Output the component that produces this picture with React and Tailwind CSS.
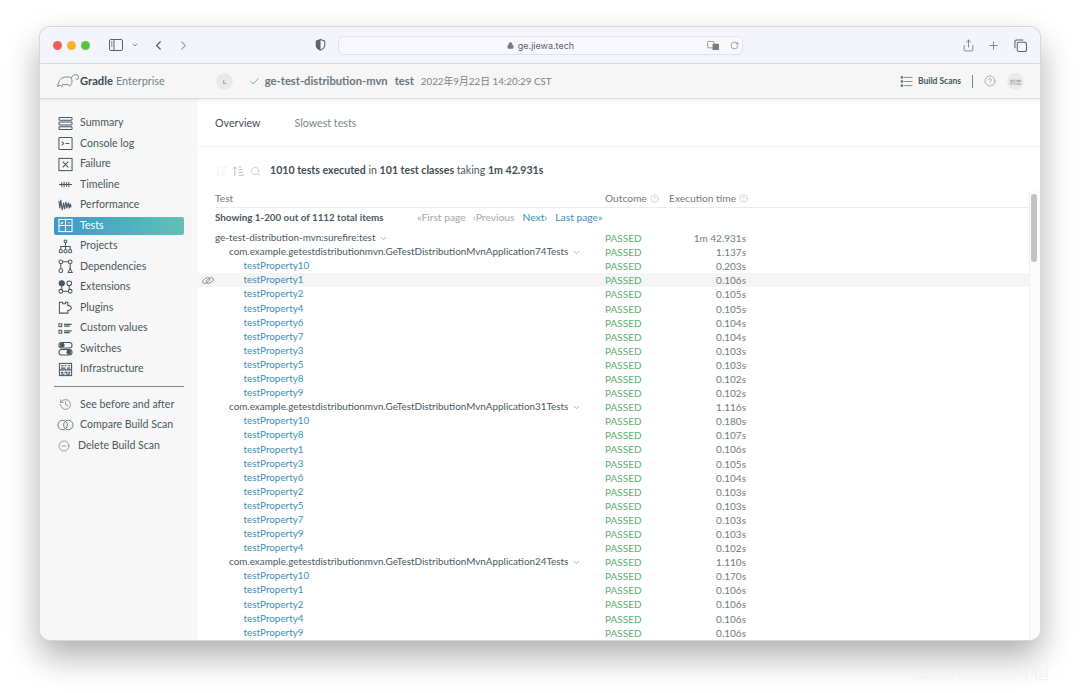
import React from "react";
import {
  ChevronLeft, ChevronRight, ChevronDown, Plus, Check, Search, Lock, RotateCw, Share, HelpCircle,
  History, MinusCircle,
} from "lucide-react";

const stroke = { fill: "none", stroke: "currentColor", strokeWidth: 1.1 };

function Ico({ children }) {
  return <svg viewBox="0 0 16 16" className="w-[15px] h-[15px]" {...stroke}>{children}</svg>;
}

const navItems = [
  { label: "Summary", icon: <Ico><rect x="1" y="1.5" width="14" height="3" rx="1" /><rect x="1" y="6.5" width="14" height="3" rx="1" /><rect x="1" y="11.5" width="14" height="3" rx="1" /></Ico> },
  { label: "Console log", icon: <Ico><rect x="1" y="1.5" width="14" height="13" rx="1" /><path d="M4 6l2 2-2 2M8 8h4" /></Ico> },
  { label: "Failure", icon: <Ico><rect x="1" y="1.5" width="14" height="13" /><path d="M5 5l6 6M11 5l-6 6" /></Ico> },
  { label: "Timeline", icon: <Ico><path d="M1 8h14M4 5.5v5M6.5 5v6M9 5.5v5M11.5 5v6" /></Ico> },
  { label: "Performance", icon: <Ico><path d="M1 3l1 8 1-9 1.5 11L6 5l1 7 1.500-8 1 7 1.500-6 1 6 1-5 1 4" /></Ico> },
  { label: "Tests", active: true, icon: <Ico><rect x="1" y="1.5" width="14" height="13" /><path d="M8 1.5v13M1 8h14M3 5l1 1 1.500-2M10.5 5h2" /></Ico> },
  { label: "Projects", icon: <Ico><rect x="6.5" y="1" width="3" height="3" rx="1.5" /><path d="M8 4v4M3 11V8h10v3M8 8v3" /><circle cx="3" cy="13" r="1.7" /><circle cx="8" cy="13" r="1.7" /><circle cx="13" cy="13" r="1.7" /></Ico> },
  { label: "Dependencies", icon: <Ico><circle cx="3" cy="3" r="2" /><circle cx="13" cy="3" r="2" /><path d="M5 3h6M3 5v5M13 5v5" /><circle cx="3" cy="12.5" r="2" /><path d="M13 10l2.200 4.500h-4.400z" /></Ico> },
  { label: "Extensions", icon: <Ico><circle cx="4" cy="3.5" r="2.8" fill="currentColor" /><circle cx="12" cy="3.5" r="2.5" /><circle cx="3" cy="12" r="2" /><circle cx="13" cy="12" r="2" /><path d="M5 12h6M4 7v3M12 6v4" /></Ico> },
  { label: "Plugins", icon: <Ico><path d="M1.5 2.5H5V4h3V2.500h2.500V6h2l2 2.500-2 2.500h-2v3h-9z" /></Ico> },
  { label: "Custom values", icon: <Ico><rect x="1" y="3" width="3" height="3" /><rect x="1" y="10" width="3" height="3" /><path d="M6.5 3.5h8M6.5 5.5h6M6.5 10.5h8M6.5 12.5h6" strokeWidth="1.3" /></Ico> },
  { label: "Switches", icon: <Ico><rect x="1" y="1.5" width="14" height="6" rx="3" /><circle cx="4.5" cy="4.5" r="2" fill="currentColor" /><rect x="1" y="9" width="14" height="6" rx="3" /><circle cx="11.5" cy="12" r="2" fill="currentColor" /></Ico> },
  { label: "Infrastructure", icon: <Ico><rect x="1.5" y="1.5" width="13" height="13" /><path d="M3 4h3M7 4h2M10.5 4H13M3 6.5h5M9.5 6.5H13M1.5 8.5h13M3 11h2.500M7 11h3M11 11h2M3 13h4M8.5 13H13" strokeWidth="1.3" /></Ico> },
];

function Group({ name, time, rows }) {
  return (
    <>
      <Row indent="pl-[14px]" time={time}>
        <span className="text-[#4a5860] text-[9.9px]">{name}</span>
        <ChevronDown className="w-[9px] h-[9px] ml-[4px] text-[#8a959b]" />
      </Row>
      {rows.map(([n, t]) => (
        <Row key={n} indent="pl-[28.5px]" time={t} highlight={name.includes("74") && n === 1}>
          <span className="text-[#3b8fb5] text-[9.9px]">testProperty{n}</span>
        </Row>
      ))}
    </>
  );
}

function Row({ indent, time, highlight, children }) {
  return (
    <div className={`relative flex items-center h-[14.1px] leading-none ${highlight ? "bg-[#f5f5f5] -ml-[17px] pl-[17px]" : ""}`}>
      {highlight && (
        <svg viewBox="0 0 14 10" className="absolute left-[4px] w-[12px] h-[9px] text-[#85898d]" fill="none" stroke="currentColor" strokeWidth="1">
          <ellipse cx="4.8" cy="5" rx="4.6" ry="2.6" transform="rotate(-35 4.8 5)" />
          <ellipse cx="9.2" cy="5" rx="4.6" ry="2.6" transform="rotate(-35 9.2 5)" />
        </svg>
      )}
      <div className={`w-[390px] flex items-center shrink-0 ${indent}`}>{children}</div>
      <div className="w-[80px] text-[#5eae72] shrink-0">PASSED</div>
      <div className="w-[61px] text-right text-[#737b80] shrink-0">{time}</div>
    </div>
  );
}

const group1 = [[10, "0.203s"], [1, "0.106s"], [2, "0.105s"], [4, "0.105s"], [6, "0.104s"], [7, "0.104s"], [3, "0.103s"], [5, "0.103s"], [8, "0.102s"], [9, "0.102s"]];
const group2 = [[10, "0.180s"], [8, "0.107s"], [1, "0.106s"], [3, "0.105s"], [6, "0.104s"], [2, "0.103s"], [5, "0.103s"], [7, "0.103s"], [9, "0.103s"], [4, "0.102s"]];
const group3 = [[10, "0.170s"], [1, "0.106s"], [2, "0.106s"], [4, "0.106s"], [9, "0.106s"]];

export default function App() {
  return (
    <div className="relative w-[1080px] h-[693px] overflow-hidden bg-white pt-[27px] px-[40px] font-['Lato','Noto_Sans_CJK_SC',sans-serif] text-[#4a5860]">
      <div className="h-[613px] rounded-[10px] overflow-hidden flex flex-col bg-white shadow-[0_0_0_1px_#d8d8da,0_16px_34px_rgba(0,0,0,0.33)]">

        {/* browser toolbar */}
        <div className="h-[37px] shrink-0 flex items-center bg-[#f4f4fd] border-b border-[#dcdce6] relative text-[#5f6166]">
          <div className="flex items-center gap-[5px] ml-[13px]">
            <span className="w-[9px] h-[9px] rounded-full bg-[#ee5f54]" />
            <span className="w-[9px] h-[9px] rounded-full bg-[#f5b62f]" />
            <span className="w-[9px] h-[9px] rounded-full bg-[#5cc242]" />
          </div>
          <svg viewBox="0 0 14 12" className="w-[14px] h-[12px] ml-[19px]" fill="none" stroke="currentColor" strokeWidth="1">
            <rect x="0.5" y="0.5" width="13" height="11" rx="1.5" />
            <path d="M5 .5v11M2 3h1.500M2 5h1.500M2 7h1.500" />
          </svg>
          <ChevronDown className="w-[8px] h-[8px] ml-[8px] text-[#77797e]" strokeWidth={2.5} />
          <ChevronLeft className="w-[15px] h-[15px] ml-[12px]" strokeWidth={1.8} />
          <ChevronRight className="w-[15px] h-[15px] ml-[10px] text-[#a6a7ad]" strokeWidth={1.8} />
          <svg viewBox="0 0 12 14" className="w-[11px] h-[12px] ml-[124px]">
            <path d="M6 .7l5 1.800v4.500c0 3-2.200 4.800-5 6-2.800-1.200-5-3-5-6V2.500z" fill="none" stroke="currentColor" strokeWidth="1.2" />
            <path d="M6 .7v13c-2.800-1.200-5-3-5-6V2.500z" fill="currentColor" />
          </svg>
          <div className="w-[405px] h-[19px] ml-[12px] pt-[1px] rounded-[5px] border border-[#e2e2ec] bg-[#f7f7fd] flex items-center justify-center relative">
            <Lock className="w-[7px] h-[7px] mr-[4px] text-[#77797e]" fill="currentColor" />
            <span className="text-[9px] text-[#5f6166] font-['Inter',sans-serif]">ge.jiewa.tech</span>
            <svg viewBox="0 0 14 11" className="absolute right-[22px] w-[13px] h-[10px] text-[#77797e]">
              <rect x="0.5" y="0.5" width="7" height="7" rx="1" fill="none" stroke="currentColor" strokeWidth="0.8" />
              <rect x="6" y="3" width="7" height="7" rx="1" fill="currentColor" />
            </svg>
            <RotateCw className="absolute right-[3px] w-[9px] h-[9px] text-[#8a8b90]" />
          </div>
          <Share className="absolute right-[65px] w-[13px] h-[13px]" strokeWidth={1.3} />
          <Plus className="absolute right-[40px] w-[13px] h-[13px]" strokeWidth={1.3} />
          <svg viewBox="0 0 14 14" className="absolute right-[13px] w-[13px] h-[13px]" fill="none" stroke="currentColor" strokeWidth="1.1">
            <rect x="3.5" y="3.5" width="10" height="10" rx="2" />
            <path d="M1 10V2.500A1.500 1.500 0 0 1 2.500 1H10" />
          </svg>
        </div>

        {/* app header */}
        <div className="h-[35px] shrink-0 flex items-center bg-[#f6f6f6] border-b border-[#dddddd] shadow-[0_1px_3px_rgba(0,0,0,0.08)] relative z-10">
          <svg viewBox="0 0 24 16" className="w-[23px] h-[16px] ml-[17px] text-[#5a6a72]" fill="none" stroke="currentColor" strokeWidth="0.8">
            <path d="M1 14c0-5 2-9 7-10 3-.6 5 0 7 .5 1-2 3-3.500 5.500-3 2 .5 2.500 3 1.500 4.500-1 1-2 .5-2.500-.5M15 5c1 3 1 5-.5 7l-1.500 1.500-1.500-2c-2 .5-4 .5-5.500 0L5 14l-2-2-2 2" />
          </svg>
          <span className="text-[11.2px] font-bold text-[#3c4d55]">Gradle</span>
          <span className="text-[10.9px] ml-[3px] text-[#75838a]">Enterprise</span>
          <span className="w-[17px] h-[17px] rounded-full bg-[#e9e9ea] ml-[51px] flex items-center justify-center text-[6px] font-bold text-[#8b9094]">L</span>
          <Check className="w-[11px] h-[11px] ml-[16px] text-[#5eae72]" />
          <span className="text-[11.2px] font-bold ml-[5px] text-[#6d7579]">ge-test-distribution-mvn</span>
          <span className="text-[11.2px] font-bold ml-[7px] text-[#6d7579]">test</span>
          <span className="text-[9.8px] ml-[7px] text-[#7d8488]">2022年9月22日 14:20:29 CST</span>
          <div className="ml-auto flex items-center">
            <svg viewBox="0 0 13 12" className="w-[13px] h-[11px] text-[#6a757b]" fill="none" stroke="currentColor" strokeWidth="0.9">
              <path d="M4 1.500h9M4 6h9M4 10.500h9" />
              <circle cx="1.5" cy="1.5" r="1.1" fill="currentColor" />
              <circle cx="1.5" cy="6" r="1.1" fill="currentColor" />
              <circle cx="1.5" cy="10.5" r="1.1" fill="currentColor" />
            </svg>
            <span className="text-[8.5px] font-bold ml-[5px] text-[#475860]">Build Scans</span>
            <span className="w-px h-[13px] bg-[#7d868b] ml-[11px]" />
            <HelpCircle className="w-[12px] h-[12px] ml-[11px] text-[#7d8488]" strokeWidth={1.2} />
            <span className="w-[17px] h-[17px] rounded-full bg-[#eaeaea] ml-[11px] mr-[16px] flex items-center justify-center text-[6px] text-[#8b9094]">刘志</span>
          </div>
        </div>

        <div className="flex-1 flex min-h-0">
          {/* sidebar */}
          <aside className="w-[158px] shrink-0 bg-[#f7f7f7] pt-[15px] pl-[14px] pr-[14px]">
            {navItems.map((it) => (
              <div
                key={it.label}
                className={`h-[18.5px] mb-[2px] flex items-center pl-[4px] rounded-[2px] ${it.active ? "bg-gradient-to-r from-[#3f98c9] to-[#62c0b4] text-white" : "text-[#4a5860]"}`}
              >
                <span className="w-[22px] shrink-0 flex">{it.icon}</span>
                <span className="text-[10.6px]">{it.label}</span>
              </div>
            ))}
            <div className="border-t border-[#7f8a90] mt-[7px] mb-[9px]" />
            <div className="h-[18.5px] mb-[2px] flex items-center pl-[5px]">
              <History className="w-[13px] h-[13px] text-[#5a6a72]" strokeWidth={1.2} />
              <span className="text-[10.6px] ml-[8px]">See before and after</span>
            </div>
            <div className="h-[18.5px] mb-[2px] flex items-center pl-[3px]">
              <svg viewBox="0 0 18 12" className="w-[17px] h-[12px] text-[#5a6a72]" fill="none" stroke="currentColor" strokeWidth="0.9">
                <circle cx="6" cy="6" r="5" />
                <circle cx="12" cy="6" r="5" />
              </svg>
              <span className="text-[10.6px] ml-[6px]">Compare Build Scan</span>
            </div>
            <div className="h-[18.5px] flex items-center pl-[4px]">
              <MinusCircle className="w-[12px] h-[12px] text-[#5a6a72]" strokeWidth={1.2} />
              <span className="text-[10.6px] ml-[8px]">Delete Build Scan</span>
            </div>
          </aside>

          {/* main */}
          <main className="flex-1 min-w-0 flex flex-col relative">
            <div className="h-[48px] shrink-0 flex items-center pl-[17px] pt-[2px] border-b border-[#f0f0f0] text-[10.7px]">
              <span className="text-[#3f4f57]">Overview</span>
              <span className="ml-[34px] text-[#7d868b]">Slowest tests</span>
            </div>
            <div className="flex items-center h-[45px] shrink-0 pl-[17px] pt-[3px]">
              <svg viewBox="0 0 14 12" className="w-[13px] h-[11px] text-[#ececec]" fill="none" stroke="currentColor" strokeWidth="1">
                <path d="M3 1v10M1 9l2 2 2-2M7 1h6M7 4h5M7 7h4M7 10h3" />
              </svg>
              <svg viewBox="0 0 14 12" className="w-[13px] h-[11px] ml-[4px] text-[#b5b9bc]" fill="none" stroke="currentColor" strokeWidth="1">
                <path d="M3 11V1M1 3l2-2 2 2M7 1h3M7 4h4M7 7h5M7 10h6" />
              </svg>
              <Search className="w-[11px] h-[11px] ml-[5px] text-[#aeb2b5]" strokeWidth={1.2} />
              <p className="text-[10.6px] ml-[9px] text-[#4a5860]">
                <span className="font-bold text-[#3f4f57]">1010 tests executed</span> in <span className="font-bold text-[#3f4f57]">101 test classes</span> taking <span className="font-bold text-[#3f4f57]">1m 42.931s</span>
              </p>
            </div>
            <div className="flex-1 min-h-0 pl-[17px] pr-[11px] overflow-hidden text-[10px]">
              <div className="flex items-center h-[16px] border-b border-[#ececec] text-[#737b80] pb-[2px] text-[10.2px]">
                <div className="w-[390px]">Test</div>
                <div className="w-[64px] flex items-center shrink-0">
                  Outcome
                  <HelpCircle className="w-[9px] h-[9px] ml-[3px] text-[#a8adb0]" strokeWidth={1.2} />
                </div>
                <div className="flex items-center">
                  Execution time
                  <HelpCircle className="w-[9px] h-[9px] ml-[3px] text-[#a8adb0]" strokeWidth={1.2} />
                </div>
              </div>
              <div className="flex items-center h-[19px]">
                <span className="font-bold text-[#4a5860] w-[202px] text-[9.8px]">Showing 1-200 out of 1112 total items</span>
                <span className="text-[#a3a8ab] text-[10.3px]">«First page</span>
                <span className="ml-[7px] text-[#a3a8ab] text-[10.3px]">‹Previous</span>
                <span className="ml-[8px] text-[#3b8fb5] text-[10.3px]">Next›</span>
                <span className="ml-[8px] text-[#3b8fb5] text-[10.3px]">Last page»</span>
              </div>
              <div className="mt-[4px]">
                <Row indent="" time="1m 42.931s">
                  <span className="text-[#4a5860] text-[9.9px]">ge-test-distribution-mvn:surefire:test</span>
                  <ChevronDown className="w-[9px] h-[9px] ml-[4px] text-[#8a959b]" />
                </Row>
                <Group name="com.example.getestdistributionmvn.GeTestDistributionMvnApplication74Tests" time="1.137s" rows={group1} />
                <Group name="com.example.getestdistributionmvn.GeTestDistributionMvnApplication31Tests" time="1.116s" rows={group2} />
                <Group name="com.example.getestdistributionmvn.GeTestDistributionMvnApplication24Tests" time="1.110s" rows={group3} />
              </div>
            </div>
            {/* scrollbar */}
            <div className="absolute right-0 top-[92px] bottom-0 w-[11px] bg-[#fbfbfb] border-l border-[#efefef]">
              <div className="mt-[3px] ml-[1px] w-[6px] h-[68px] rounded-full bg-[#c2c2c2]" />
            </div>
          </main>
        </div>
      </div>
      <span className="absolute left-[912px] top-[663px] text-[15px] text-[#f2f2f2] font-['Liberation_Sans','Noto_Sans_CJK_SC',sans-serif] whitespace-nowrap">CSDN @Gradle中国</span>
    </div>
  );
}
